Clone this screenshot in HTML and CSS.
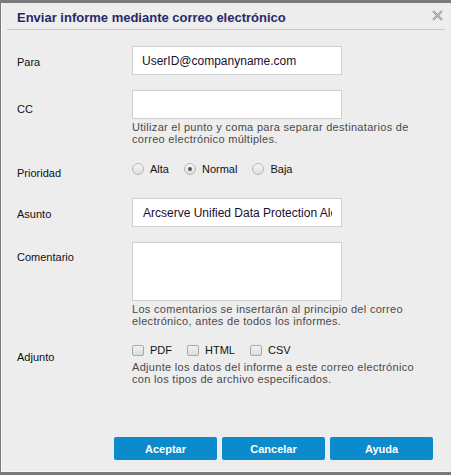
FILE: index.html
```html
<!DOCTYPE html>
<html lang="es">
<head>
<meta charset="utf-8">
<title>Enviar informe mediante correo electrónico</title>
<link rel="stylesheet" href="styles.css">
</head>
<body>
<div class="dialog">
  <div class="header">
    <div class="title">Enviar informe mediante correo electrónico</div>
    <svg class="close" width="11" height="11" viewBox="0 0 11 11"><path d="M1 1L10 10M10 1L1 10" stroke="#9a9a9a" stroke-width="2.2" fill="none"/><path d="M1 1L10 10M10 1L1 10" stroke="#d6d6d6" stroke-width="0.7" fill="none"/></svg>
  </div>
  <div class="form">
    <div class="row row-para">
      <div class="label lp-para">Para</div>
      <div class="field"><input class="text" type="text" value="UserID@companyname.com"></div>
    </div>
    <div class="row row-cc">
      <div class="label lp-cc">CC</div>
      <div class="field">
        <input class="text" type="text" value="">
        <div class="hint">Utilizar el punto y coma para separar destinatarios de correo electrónico múltiples.</div>
      </div>
    </div>
    <div class="row row-prio">
      <div class="label lp-prio">Prioridad</div>
      <div class="field options">
        <span class="opt"><span class="radio"></span>Alta</span>
        <span class="opt"><span class="radio on"></span>Normal</span>
        <span class="opt"><span class="radio"></span>Baja</span>
      </div>
    </div>
    <div class="row row-asunto">
      <div class="label lp-asunto">Asunto</div>
      <div class="field"><input class="text subject" type="text" value="Arcserve Unified Data Protection Alert"></div>
    </div>
    <div class="row row-com">
      <div class="label lp-com">Comentario</div>
      <div class="field">
        <textarea class="area"></textarea>
        <div class="hint">Los comentarios se insertarán al principio del correo electrónico, antes de todos los informes.</div>
      </div>
    </div>
    <div class="row row-adj">
      <div class="label lp-adj">Adjunto</div>
      <div class="field">
        <div class="options">
          <span class="opt chk-opt"><span class="check"></span>PDF</span>
          <span class="opt chk-opt"><span class="check"></span>HTML</span>
          <span class="opt chk-opt"><span class="check"></span>CSV</span>
        </div>
        <div class="hint hint-adj">Adjunte los datos del informe a este correo electrónico con los tipos de archivo especificados.</div>
      </div>
    </div>
  </div>
  <div class="footer">
    <button class="btn">Aceptar</button>
    <button class="btn">Cancelar</button>
    <button class="btn">Ayuda</button>
  </div>
</div>
</body>
</html>
```
FILE: styles.css
```css
html, body {
  margin: 0;
  padding: 0;
  background: #7b7b7b;
  width: 451px;
  height: 475px;
  overflow: hidden;
}
.dialog {
  box-sizing: border-box;
  margin: 3px 0 0 1px;
  height: 469px;
  background: #ededed;
  border-left: 1px solid #f6f6f6;
  border-bottom: 1px solid #f6f6f6;
  display: flex;
  flex-direction: column;
  position: relative;
  font-family: "Liberation Sans", Arial, sans-serif;
  color: #1e1e1e;
}
.header {
  height: 27px;
  margin: 0 6px 0 5px;
  border-bottom: 1px solid #c8c8c8;
  box-sizing: border-box;
  padding: 6px 0 0 10px;
}
.title {
  font-size: 13px;
  line-height: 17px;
  font-weight: bold;
  color: #27286a;
}
.close {
  position: absolute;
  top: 7px;
  right: 8px;
}
.form {
  padding-left: 15px;
  padding-top: 16px;
}
.row {
  display: flex;
}
.label {
  width: 115px;
  font-size: 11px;
  line-height: 13px;
  color: #111;
}
.lp-para { padding-top: 10px; }
.lp-cc { padding-top: 13px; }
.lp-prio { padding-top: 5px; }
.lp-asunto { padding-top: 10px; }
.lp-com { padding-top: 9px; }
.lp-adj { padding-top: 8px; }
.field {
  width: 210px;
}
.text {
  box-sizing: border-box;
  width: 210px;
  height: 29px;
  margin: 0;
  border: 1px solid #cfcfcf;
  background: #fff;
  padding: 0 9px;
  font-family: "Liberation Sans", Arial, sans-serif;
  font-size: 12px;
  color: #1c0f2e;
  outline: none;
}
.subject {
  padding-left: 10px;
}
.area {
  display: block;
  box-sizing: border-box;
  width: 210px;
  height: 59px;
  margin: 0;
  border: 1px solid #cfcfcf;
  background: #fff;
  resize: none;
  outline: none;
}
.hint {
  width: 282px;
  margin-top: 2px;
  font-size: 11px;
  line-height: 12px;
  letter-spacing: 0.3px;
  color: #4a4a4a;
}
.hint-adj { margin-top: 4px; }
.row-cc { margin-top: 15px; }
.row-prio { margin-top: 17px; }
.row-asunto { margin-top: 18px; }
.row-com { margin-top: 15px; }
.row-adj { margin-top: 16px; }
.options {
  display: flex;
  align-items: center;
  height: 14px;
  font-size: 11px;
  color: #111;
}
.opt {
  display: flex;
  align-items: center;
  margin-right: 15px;
}
.radio {
  box-sizing: border-box;
  width: 12px;
  height: 12px;
  border-radius: 50%;
  border: 1px solid #b8b8b8;
  background: linear-gradient(#f6f6f6, #dedede);
  margin-right: 6px;
  position: relative;
}
.radio.on::after {
  content: "";
  position: absolute;
  left: 3px;
  top: 3px;
  width: 4px;
  height: 4px;
  border-radius: 50%;
  background: #555;
}
.check {
  box-sizing: border-box;
  width: 12px;
  height: 11px;
  border-radius: 2px;
  border: 1px solid #a9a9a9;
  background: linear-gradient(#f2f2f2, #dcdcdc);
  margin-right: 6px;
}
.chk-opt { margin-right: 15px; }
.footer {
  margin-top: auto;
  display: flex;
  justify-content: flex-end;
  gap: 5px;
  padding: 0 18px 11px 0;
}
.btn {
  width: 103px;
  height: 23px;
  margin: 0;
  border: none;
  border-radius: 2px;
  background: #0b8bcb;
  color: #fff;
  font-family: "Liberation Sans", Arial, sans-serif;
  font-size: 11px;
  font-weight: bold;
  padding: 0;
}
```
